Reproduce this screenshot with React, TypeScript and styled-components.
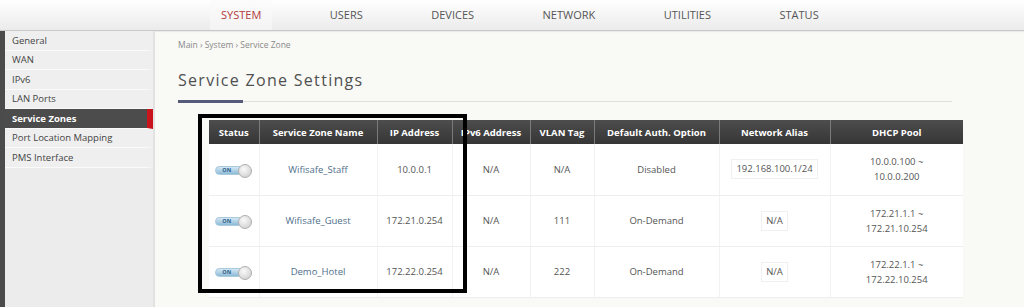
import { FC } from 'react';
import styled, { createGlobalStyle } from 'styled-components';

const GlobalStyle = createGlobalStyle`
  html, body {
    margin: 0;
    padding: 0;
    background: #f9f9f6;
    font-family: 'Open Sans', 'Liberation Sans', sans-serif;
  }
  * { box-sizing: border-box; }
`;

const Page = styled.div`
  width: 1024px;
  height: 307px;
  overflow: hidden;
  display: flex;
  flex-direction: column;
`;

const TopNav = styled.nav`
  height: 31px;
  flex-shrink: 0;
  display: flex;
  align-items: stretch;
  gap: 46.5px;
  padding-left: 210px;
  background: linear-gradient(#ffffff, #ebebeb);
  border-bottom: 1px solid #c9c9c9;
  box-shadow: 0 1px 1px rgba(0, 0, 0, 0.06);
`;

const Tab = styled.div<{ $active?: boolean }>`
  display: flex;
  align-items: center;
  padding: 0 11px 1px;
  font-size: 11px;
  font-weight: 400;
  text-transform: uppercase;
  color: ${(p) => (p.$active ? '#b23a3a' : '#555555')};
  background: ${(p) => (p.$active ? 'linear-gradient(#fcfcfc, #f3f3f3)' : 'transparent')};
`;

const Body = styled.div`
  flex: 1;
  display: flex;
  min-height: 0;
`;

const Sidebar = styled.aside`
  width: 155px;
  flex-shrink: 0;
  background: #ececec;
  border-left: 5px solid #4b4b4b;
  border-right: 2px solid #e2e2e2;
`;

const SideItem = styled.div<{ $active?: boolean }>`
  height: 19.5px;
  display: flex;
  align-items: center;
  padding-left: 7px;
  font-size: 9.5px;
  font-weight: ${(p) => (p.$active ? 700 : 400)};
  color: ${(p) => (p.$active ? '#ffffff' : '#444444')};
  background: ${(p) => (p.$active ? '#4c4c4c' : '#efefef')};
  border-bottom: 1px solid #fafafa;
  border-right: 6px solid ${(p) => (p.$active ? '#c8141b' : 'transparent')};
`;

const Content = styled.main`
  flex: 1;
  min-width: 0;
  padding: 8px 72px 0 23px;
`;

const Breadcrumb = styled.div`
  font-size: 8.5px;
  line-height: 12px;
  color: #8a8a8a;
`;

const Title = styled.h1`
  margin: 18px 0 0;
  font-size: 16px;
  line-height: 22px;
  font-weight: 400;
  letter-spacing: 1.3px;
  color: #505050;
`;

const Divider = styled.div`
  margin-top: 9px;
  height: 3px;
  display: flex;
  align-items: center;
`;

const DividerAccent = styled.div`
  width: 65px;
  height: 3px;
  background: #555b78;
`;

const DividerLine = styled.div`
  flex: 1;
  height: 1px;
  background: #dedede;
`;

const TableWrap = styled.div`
  position: relative;
  margin: 17px 0 0 31px;
  width: 754px;
`;

const Highlight = styled.div`
  position: absolute;
  left: -11px;
  top: -6px;
  width: 269px;
  height: 179px;
  border: 4px solid #000;
  pointer-events: none;
`;

const Table = styled.table`
  width: 754px;
  table-layout: fixed;
  border-collapse: collapse;
  background: #ffffff;
`;

const Th = styled.th`
  height: 24px;
  padding: 0;
  font-size: 9.5px;
  font-weight: 700;
  color: #ffffff;
  text-align: center;
  background: linear-gradient(#4d4d4d, #353535);
  border-left: 1px solid #7a7a7a;
  &:first-child { border-left: none; }
`;

const Td = styled.td`
  height: 51px;
  padding: 0;
  font-size: 9.5px;
  line-height: 15px;
  color: #555555;
  text-align: center;
  vertical-align: middle;
  border-bottom: 1px solid #eeeeee;
  border-left: 1px solid #f2f2f2;
  &:first-child { border-left: none; }
`;

const ZoneName = styled.span`
  color: #4f6f8c;
`;

const AliasBox = styled.span`
  display: inline-block;
  padding: 2px 4px;
  border: 1px solid #f0f0f0;
  background: #fff;
  line-height: 14px;
`;

const Switch = styled.span`
  display: inline-flex;
  align-items: center;
`;

const SwitchTrack = styled.span`
  width: 28px;
  height: 9px;
  border-radius: 5px;
  background: linear-gradient(#d4e8f5, #8cbad6);
  border: 1px solid #a9c9dd;
  font-size: 5.5px;
  font-weight: 700;
  line-height: 7px;
  color: #2c5f86;
  text-align: left;
  padding-left: 6px;
`;

const SwitchKnob = styled.span`
  width: 14px;
  height: 14px;
  margin-left: -5px;
  border-radius: 50%;
  background: radial-gradient(circle at 40% 35%, #fafafa, #c8c8c8);
  border: 1px solid #b0b0b0;
`;

const Toggle: FC = () => (
  <Switch>
    <SwitchTrack>ON</SwitchTrack>
    <SwitchKnob />
  </Switch>
);

const tabs = ['System', 'Users', 'Devices', 'Network', 'Utilities', 'Status'];
const sideItems = [
  'General',
  'WAN',
  'IPv6',
  'LAN Ports',
  'Service Zones',
  'Port Location Mapping',
  'PMS Interface',
];
const columns = [
  { label: 'Status', width: 50 },
  { label: 'Service Zone Name', width: 118 },
  { label: 'IP Address', width: 75 },
  { label: 'IPv6 Address', width: 78 },
  { label: 'VLAN Tag', width: 64 },
  { label: 'Default Auth. Option', width: 125 },
  { label: 'Network Alias', width: 111 },
  { label: 'DHCP Pool', width: 133 },
];

const zones = [
  {
    name: 'Wifisafe_Staff',
    ip: '10.0.0.1',
    vlan: 'N/A',
    auth: 'Disabled',
    alias: '192.168.100.1/24',
    pool: ['10.0.0.100 ~', '10.0.0.200'],
  },
  {
    name: 'Wifisafe_Guest',
    ip: '172.21.0.254',
    vlan: '111',
    auth: 'On-Demand',
    alias: 'N/A',
    pool: ['172.21.1.1 ~', '172.21.10.254'],
  },
  {
    name: 'Demo_Hotel',
    ip: '172.22.0.254',
    vlan: '222',
    auth: 'On-Demand',
    alias: 'N/A',
    pool: ['172.22.1.1 ~', '172.22.10.254'],
  },
];

const App: FC = () => (
  <Page>
    <GlobalStyle />
    <TopNav>
      {tabs.map((t) => (
        <Tab key={t} $active={t === 'System'}>
          {t}
        </Tab>
      ))}
    </TopNav>
    <Body>
      <Sidebar>
        {sideItems.map((s) => (
          <SideItem key={s} $active={s === 'Service Zones'}>
            {s}
          </SideItem>
        ))}
      </Sidebar>
      <Content>
        <Breadcrumb>Main › System › Service Zone</Breadcrumb>
        <Title>Service Zone Settings</Title>
        <Divider>
          <DividerAccent />
          <DividerLine />
        </Divider>
        <TableWrap>
          <Table>
            <colgroup>
              {columns.map((c) => (
                <col key={c.label} style={{ width: c.width }} />
              ))}
            </colgroup>
            <thead>
              <tr>
                {columns.map((c) => (
                  <Th key={c.label}>{c.label}</Th>
                ))}
              </tr>
            </thead>
            <tbody>
              {zones.map((z) => (
                <tr key={z.name}>
                  <Td>
                    <Toggle />
                  </Td>
                  <Td>
                    <ZoneName>{z.name}</ZoneName>
                  </Td>
                  <Td>{z.ip}</Td>
                  <Td>N/A</Td>
                  <Td>{z.vlan}</Td>
                  <Td>{z.auth}</Td>
                  <Td>
                    <AliasBox>{z.alias}</AliasBox>
                  </Td>
                  <Td>
                    {z.pool[0]}
                    <br />
                    {z.pool[1]}
                  </Td>
                </tr>
              ))}
            </tbody>
          </Table>
          <Highlight />
        </TableWrap>
      </Content>
    </Body>
  </Page>
);

export default App;
